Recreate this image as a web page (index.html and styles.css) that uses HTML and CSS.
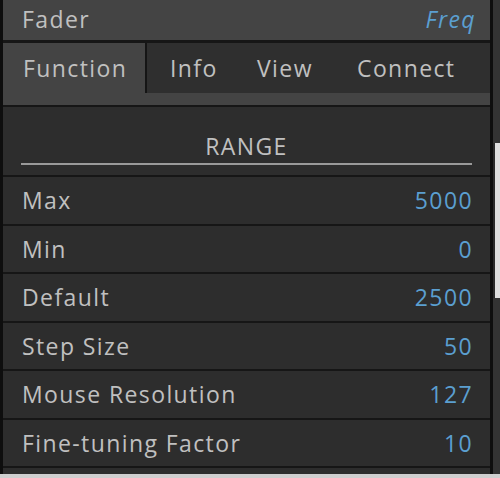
FILE: index.html
```html
<!DOCTYPE html>
<html lang="en">
<head>
  <meta charset="UTF-8">
  <title>Fader</title>
  <link rel="stylesheet" href="styles.css">
</head>
<body>
  <div class="frame">
    <div class="panel">
      <div class="title-bar">
        <span class="name">Fader</span>
        <span class="kind">Freq</span>
      </div>

      <div class="tabs">
        <div class="tab active">Function</div>
        <div class="tab info">Info</div>
        <div class="tab view">View</div>
        <div class="tab connect">Connect</div>
      </div>
      <div class="tab-foot"></div>

      <div class="section-head">
        <div class="section-title">RANGE</div>
      </div>

      <div class="row"><span>Max</span><span class="value">5000</span></div>
      <div class="row"><span>Min</span><span class="value">0</span></div>
      <div class="row"><span>Default</span><span class="value">2500</span></div>
      <div class="row"><span>Step Size</span><span class="value">50</span></div>
      <div class="row"><span>Mouse Resolution</span><span class="value">127</span></div>
      <div class="row"><span>Fine-tuning Factor</span><span class="value">10</span></div>
      <div class="row"></div>
    </div>

    <div class="side">
      <div class="side-top"></div>
      <div class="side-light"></div>
      <div class="side-bottom"></div>
    </div>
  </div>
  <div class="bottom-strip"></div>
</body>
</html>
```

FILE: styles.css
```css
:root {
  --text: #c0c0c0;
  --blue: #5b9fd0;
  --head-bg: #444444;
  --content-bg: #2d2d2d;
  --line: #161616;
}

body {
  margin: 0;
  background: #2a2a2a;
  font-family: 'Open Sans', sans-serif;
  font-size: 23px;
  letter-spacing: 1.4px;
  color: var(--text);
  overflow: hidden;
}

.frame {
  display: flex;
  height: 474px;
}

.panel {
  width: 487px;
  flex-shrink: 0;
  border-left: 3px solid #0e0e0e;
  border-right: 3px solid #0e0e0e;
  background: var(--content-bg);
  overflow: hidden;
}

.title-bar {
  height: 43px;
  box-sizing: border-box;
  background: var(--head-bg);
  border-bottom: 3px solid var(--line);
  display: flex;
  justify-content: space-between;
  align-items: center;
  padding: 0 14px 3px 19px;
  line-height: 34px;
}

.kind {
  color: var(--blue);
  font-style: italic;
}

.tabs {
  display: flex;
  height: 50px;
  background: #2f2f2f;
}

.tab {
  flex-shrink: 0;
  box-sizing: border-box;
  display: flex;
  align-items: center;
  padding-left: 23px;
}

.tab.active {
  width: 144px;
  padding-left: 20px;
  background: var(--head-bg);
  border-right: 2px solid #151515;
}

.tab.info { width: 87px; }
.tab.view { width: 100px; }
.tab.connect { flex: 1; }

.tab-foot {
  height: 12px;
  background: var(--head-bg);
  border-bottom: 2px solid var(--line);
}

.section-head {
  height: 68px;
  padding: 0 18px;
  border-bottom: 2px solid var(--line);
}

.section-title {
  text-align: center;
  padding-top: 22px;
  height: 34px;
  line-height: 34px;
  border-bottom: 2px solid #9a9a9a;
}

.row {
  height: 46.5px;
  border-bottom: 2px solid var(--line);
  display: flex;
  justify-content: space-between;
  align-items: center;
  padding: 0 17px 0 19px;
}

.value {
  color: var(--blue);
}

.side {
  flex: 1;
  display: flex;
  flex-direction: column;
}

.side-top {
  height: 143px;
  background: #333333;
}

.side-light {
  height: 155px;
  background: #dedede;
  margin-left: 2px;
}

.side-bottom {
  flex: 1;
  background: #333333;
}

.bottom-strip {
  height: 4px;
  background: #cfcfcf;
}
```
